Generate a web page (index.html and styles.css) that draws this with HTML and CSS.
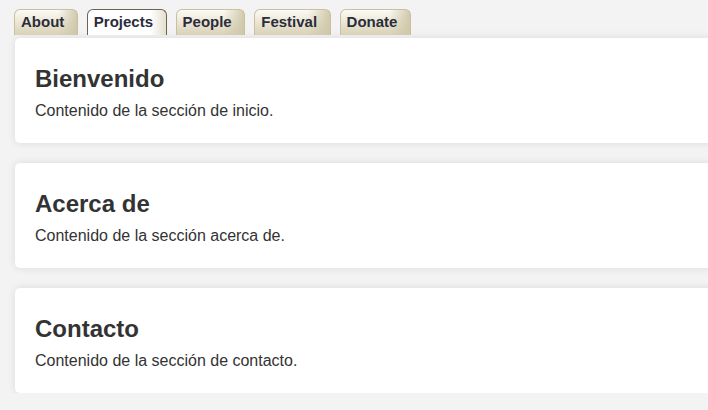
FILE: index.html
```html
<!DOCTYPE html>
<html lang="es">
<head>
<meta charset="utf-8">
<title>Tabs</title>
<link rel="stylesheet" href="styles.css">
</head>
<body>
<nav class="tabs">
  <a class="tab">About</a>
  <a class="tab active">Projects</a>
  <a class="tab">People</a>
  <a class="tab">Festival</a>
  <a class="tab">Donate</a>
</nav>
<main class="sections">
  <section class="card">
    <h2>Bienvenido</h2>
    <p>Contenido de la sección de inicio.</p>
  </section>
  <section class="card">
    <h2>Acerca de</h2>
    <p>Contenido de la sección acerca de.</p>
  </section>
  <section class="card">
    <h2>Contacto</h2>
    <p>Contenido de la sección de contacto.</p>
  </section>
</main>
</body>
</html>
```
FILE: styles.css
```css
html, body {
  margin: 0;
  padding: 0;
  background: #f3f3f3;
  overflow: hidden;
}
body {
  font-family: "Liberation Sans", Arial, sans-serif;
  color: #333;
  padding: 9px 0 0 14px;
}
.tabs {
  display: flex;
  gap: 9px;
  position: relative;
  z-index: 2;
}
.tab {
  display: block;
  box-sizing: border-box;
  height: 26px;
  padding: 3px 12.5px 0 6px;
  font-size: 15px;
  font-weight: bold;
  line-height: 17px;
  color: #2b2d3a;
  border: 1px solid #c9c0a0;
  border-bottom: none;
  border-radius: 6px 6px 0 0;
  background:
    linear-gradient(to right, rgba(255,255,255,0) 70%, rgba(205,197,165,0.9) 100%),
    linear-gradient(to bottom, #fbfaf5 0%, #ece8d8 45%, #d8d1b6 100%);
}
.tab.active {
  border-color: #6e6255;
  background:
    linear-gradient(to right, rgba(255,255,255,0) 80%, rgba(225,220,200,0.9) 100%),
    #fff;
}
.sections {
  display: flex;
  flex-direction: column;
  gap: 20px;
  margin-top: 3px;
  margin-left: 1px;
  width: 720px;
}
.card {
  background: #fff;
  border-radius: 5px;
  box-shadow: 0 0 8px rgba(0,0,0,0.1);
  padding: 27px 20px 22px 20px;
}
.card h2 {
  margin: 0 0 8px;
  font-size: 24px;
  line-height: 28px;
  font-weight: bold;
  color: #333;
}
.card p {
  margin: 0;
  font-size: 16px;
  line-height: 20px;
  color: #333;
}
```
